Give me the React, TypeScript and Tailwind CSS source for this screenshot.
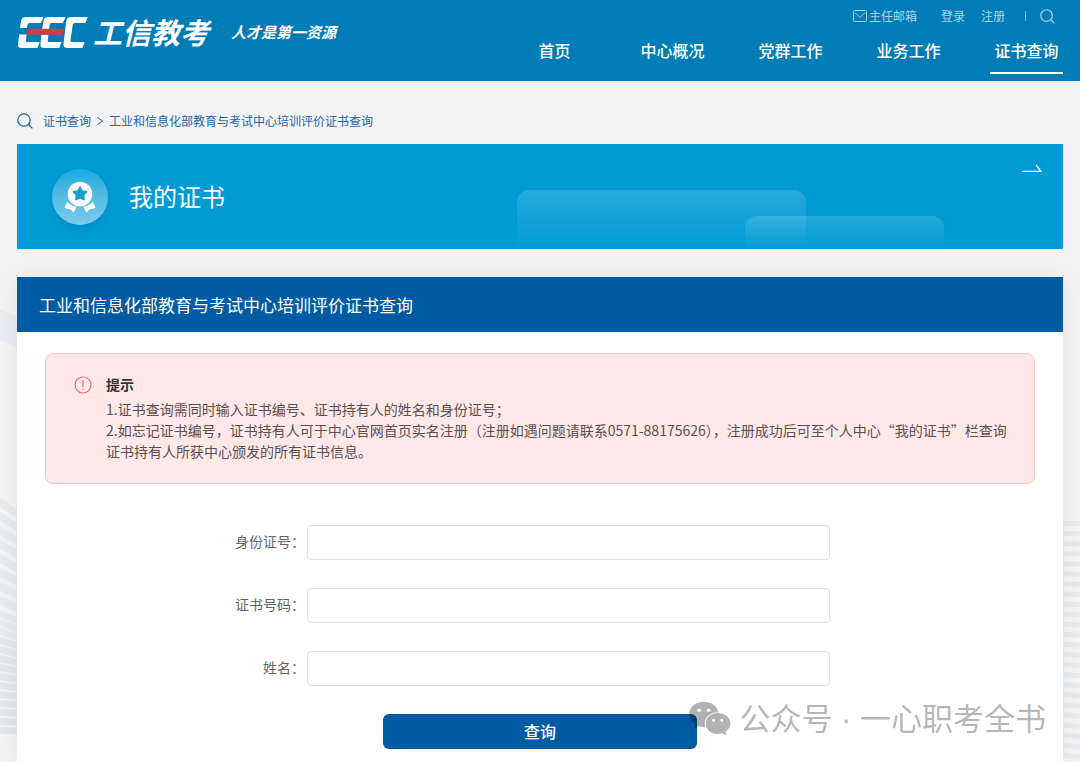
import type { ReactNode } from 'react'

const navItems = ['首页', '中心概况', '党群工作', '业务工作', '证书查询']
const activeNav = '证书查询'

const fields = [
  { id: 'id-number', label: '身份证号：' },
  { id: 'cert-number', label: '证书号码：' },
  { id: 'name', label: '姓名：' },
]

function SearchIcon({ className }: { className?: string }) {
  return (
    <svg viewBox="0 0 16 16" className={className} fill="none" stroke="currentColor" strokeWidth="1.3" aria-hidden="true">
      <circle cx="7" cy="7" r="6.2" />
      <path d="M11.5 11.5 15.4 15.4" />
    </svg>
  )
}

function Logo() {
  return (
    <svg viewBox="50 48 216 100" className="h-[33px] w-[72px]" role="img" aria-label="EEC">
      <g fill="#fff">
        <path d="M74 51H129L121 69H87Q82 69 81 74L79 84H58L61 64Q63 51 74 51Z" />
        <path d="M56 104H78L76 122Q75 127 80 127H118L111 145H64Q50 145 52 131Z" />
        <path d="M142 51H196L188 69H154Q149 69 148 74L146 88H125L129 64Q131 51 142 51Z" />
        <path d="M123 104H144L142 122Q141 127 146 127H184L177 145H131Q118 145 120 131Z" />
        <path d="M211 51H264L256 69H224Q219 69 218 74L211 122Q210 127 215 127H254L247 145H202Q188 145 190 131L198 64Q200 51 211 51Z" />
      </g>
      <path d="M82 87H194L186 105H76Z" fill="#d8384c" />
    </svg>
  )
}

function MedalIcon() {
  return (
    <svg viewBox="0 0 32 32" className="size-8" aria-hidden="true">
      <circle cx="16" cy="13" r="12.3" fill="#fff" />
      <path
        d="M16 6 18.1 10.1 22.7 10.8 19.4 14.1 20.1 18.7 16 16.6 11.9 18.7 12.6 14.1 9.3 10.8 13.9 10.1Z"
        fill="#1a9fd2"
        stroke="#1a9fd2"
        strokeWidth="1.6"
        strokeLinejoin="round"
      />
      <path d="M3.2 20.4Q7 25 12.6 25.6L9.8 31.8 6.8 28.6.4 27Z" fill="#fff" />
      <path d="M28.8 20.4Q25 25 19.4 25.6L22.2 31.8 25.2 28.6 31.6 27Z" fill="#fff" />
    </svg>
  )
}

function WechatIcon() {
  return (
    <svg viewBox="14 18 128 106" className="h-[35px] w-[42px]" fill="currentColor" aria-hidden="true">
      <mask id="wechat-back">
        <rect x="0" y="0" width="160" height="140" fill="#fff" />
        <ellipse cx="102" cy="86" rx="40" ry="34" fill="#000" />
        <circle cx="45" cy="46" r="5.5" fill="#000" />
        <circle cx="74" cy="46" r="5.5" fill="#000" />
      </mask>
      <mask id="wechat-front">
        <rect x="0" y="0" width="160" height="140" fill="#fff" />
        <circle cx="89" cy="77" r="4.5" fill="#000" />
        <circle cx="114" cy="77" r="4.5" fill="#000" />
      </mask>
      <path
        mask="url(#wechat-back)"
        d="M59 20C34 20 15 36 15 58C15 71 22 81 32 88L28 102 44 94Q51 97 59 97C84 97 104 80 104 58S84 20 59 20Z"
      />
      <path
        mask="url(#wechat-front)"
        d="M102 54C81 54 65 68 65 86S81 118 102 118Q109 118 115 116L128 123 125 111C134 105 140 96 140 86C140 68 123 54 102 54Z"
      />
    </svg>
  )
}

function TopLink({ children }: { children: ReactNode }) {
  return (
    <a href="#" className="flex items-center gap-0.5">
      {children}
    </a>
  )
}

function Header() {
  return (
    <header className="flex h-[81px] justify-between bg-[#007db6] px-[17px] text-white">
      <div className="flex h-16 items-center">
        <Logo />
        <span className="ml-1 text-[29px] font-bold italic">工信教考</span>
        <span className="ml-[22px] text-[15px] font-bold italic">人才是第一资源</span>
      </div>
      <div className="flex flex-col items-end">
        <div className="mr-2 flex h-8 items-center text-xs text-[#a9d5ea]">
          <TopLink>
            <svg viewBox="0 0 14 12" className="h-3 w-3.5" fill="none" stroke="currentColor" aria-hidden="true">
              <rect x=".5" y=".5" width="13" height="11" rx="1" />
              <path d="M2 2.5 7 7.5 12 2.5" />
            </svg>
            主任邮箱
          </TopLink>
          <span className="w-6" />
          <TopLink>登录</TopLink>
          <span className="w-4" />
          <TopLink>注册</TopLink>
          <span className="ml-5 mr-3.5 h-2.5 w-px bg-[#6db8db]" />
          <button type="button" aria-label="搜索">
            <SearchIcon className="size-[15px]" />
          </button>
        </div>
        <nav className="flex gap-[45px] text-base font-medium">
          {navItems.map((item) => (
            <a
              key={item}
              href="#"
              className={`flex h-[42px] w-[73px] justify-center whitespace-nowrap border-b-2 pt-1.5 leading-6 ${
                item === activeNav ? 'border-white' : 'border-transparent'
              }`}
            >
              {item}
            </a>
          ))}
        </nav>
      </div>
    </header>
  )
}

function Breadcrumb() {
  return (
    <div className="flex h-[63px] items-center pt-4 text-xs text-[#1b65ab]">
      <SearchIcon className="mr-2.5 size-4" />
      <a href="#">证书查询</a>
      <svg viewBox="0 0 6 8" className="mx-1.5 h-2 w-1.5" fill="none" stroke="currentColor" aria-hidden="true">
        <path d="M.3.3 5.5 4 .3 7.7" />
      </svg>
      <a href="#">工业和信息化部教育与考试中心培训评价证书查询</a>
    </div>
  )
}

function Banner() {
  return (
    <a href="#" className="relative flex h-[105px] items-center overflow-hidden bg-[#009bd4] pl-[35px] text-white">
      <div className="absolute left-[500px] top-[46px] h-[59px] w-[289px] rounded-t-xl bg-linear-to-b from-white/15 to-transparent" />
      <div className="absolute left-[728px] top-[72px] h-[33px] w-[199px] rounded-t-xl bg-linear-to-b from-white/15 to-transparent" />
      <span className="flex size-14 items-center justify-center rounded-full bg-linear-to-b from-[#16a9de] to-[#7ccbe8] shadow-[0_4px_10px_rgba(0,110,170,0.3)]">
        <MedalIcon />
      </span>
      <span className="ml-[21px] pb-0.5 text-2xl">我的证书</span>
      <svg viewBox="0 0 20 8" className="absolute right-[21px] top-5 h-2 w-5" fill="none" stroke="#fff" strokeWidth="1.3" aria-hidden="true">
        <path d="M0 7.3H19L14 1" />
      </svg>
    </a>
  )
}

function Notice() {
  return (
    <div className="mx-7 mt-[21px] flex min-h-[131px] rounded-lg border border-[#fcc3c5] bg-[#ffe8e8] pl-7 pr-5 pt-5">
      <svg viewBox="0 0 18 18" className="mt-0.5 size-[18px] shrink-0" fill="none" stroke="#fb6466" strokeWidth="1.2" aria-hidden="true">
        <circle cx="9" cy="9" r="8" />
        <path d="M9 4V11M9 12.4V13.8" />
      </svg>
      <div className="ml-3.5 text-sm leading-[21px] text-[#5b4f4f]">
        <h2 className="mb-1 font-bold text-[#333]">提示</h2>
        <p>1.证书查询需同时输入证书编号、证书持有人的姓名和身份证号；</p>
        <p>
          2.如忘记证书编号，证书持有人可于中心官网首页实名注册（注册如遇问题请联系0571-88175626），注册成功后可至个人中心“我的证书”栏查询证书持有人所获中心颁发的所有证书信息。
        </p>
      </div>
    </div>
  )
}

function QueryForm() {
  return (
    <form className="mt-[41px] flex flex-col gap-7 pb-[13px]" onSubmit={(e) => e.preventDefault()}>
      {fields.map((f) => (
        <div key={f.id} className="flex items-center">
          <label htmlFor={f.id} className="mr-0.5 w-[288px] shrink-0 pb-1 text-right text-sm text-[#666]">
            {f.label}
          </label>
          <input id={f.id} type="text" className="h-[35px] w-1/2 rounded border border-[#e2e2e2] bg-white px-3 text-sm" />
        </div>
      ))}
      <button type="submit" className="h-[35px] w-[30%] self-center rounded-md bg-[#005ca2] pb-0.5 text-base font-medium text-white">
        查询
      </button>
    </form>
  )
}

const leftStripes = Array.from({ length: 22 }, (_, i) => ({
  y: i < 8 ? 198 + i * 14 : 310 + (i - 8) * 9,
  drop: Math.max(1, 20 - i),
  height: i < 8 ? 9 : 7,
}))

const rightStripes = Array.from({ length: 24 }, (_, i) => ({ y: 221 + i * 10, drop: i * 0.15 }))

// faint striped artwork showing in the page margins
function Backdrop() {
  return (
    <div className="pointer-events-none absolute inset-0 overflow-hidden" aria-hidden="true">
      <svg className="absolute left-0 top-[300px] h-[462px] w-[30px]" viewBox="0 0 30 462">
        <path d="M0 10 30 20V52L0 41Z" fill="#e9ebf0" />
        {leftStripes.map(({ y, drop, height }, i) => (
          <path key={y} d={`M0 ${y}l30 ${drop}v${height}l-30 ${-drop}Z`} fill={i < 11 ? '#e6ebed' : '#e4e7ec'} />
        ))}
      </svg>
      <svg className="absolute right-0 top-[300px] h-[462px] w-[30px]" viewBox="0 0 30 462">
        {rightStripes.map(({ y, drop }, i) => (
          <path key={y} d={`M0 ${y}l30 ${drop}v5l-30 ${-drop}Z`} fill={i < 9 ? '#e8e9ee' : '#e6ebef'} />
        ))}
      </svg>
    </div>
  )
}

function Watermark() {
  return (
    <div className="pointer-events-none absolute bottom-5 right-[34px] flex items-center gap-2 whitespace-nowrap text-[31px] leading-[44px] text-black/30">
      <WechatIcon />
      <span>
        公众号<span className="font-['Liberation_Sans',sans-serif]"> · </span>一心职考全书
      </span>
    </div>
  )
}

export default function App() {
  return (
    <div className="relative flex min-h-screen flex-col bg-[#f3f3f3] font-['Noto_Sans_CJK_SC',sans-serif]">
      <Backdrop />
      <Header />
      <main className="relative flex flex-1 flex-col px-[17px]">
        <Breadcrumb />
        <Banner />
        <section className="mt-7 flex-1 bg-white shadow-[0_0_24px_rgba(0,0,0,0.06)]">
          <h1 className="flex h-[55px] items-center bg-[#005ca2] px-[22px] text-[17px] text-white">
            工业和信息化部教育与考试中心培训评价证书查询
          </h1>
          <Notice />
          <QueryForm />
        </section>
      </main>
      <Watermark />
    </div>
  )
}
